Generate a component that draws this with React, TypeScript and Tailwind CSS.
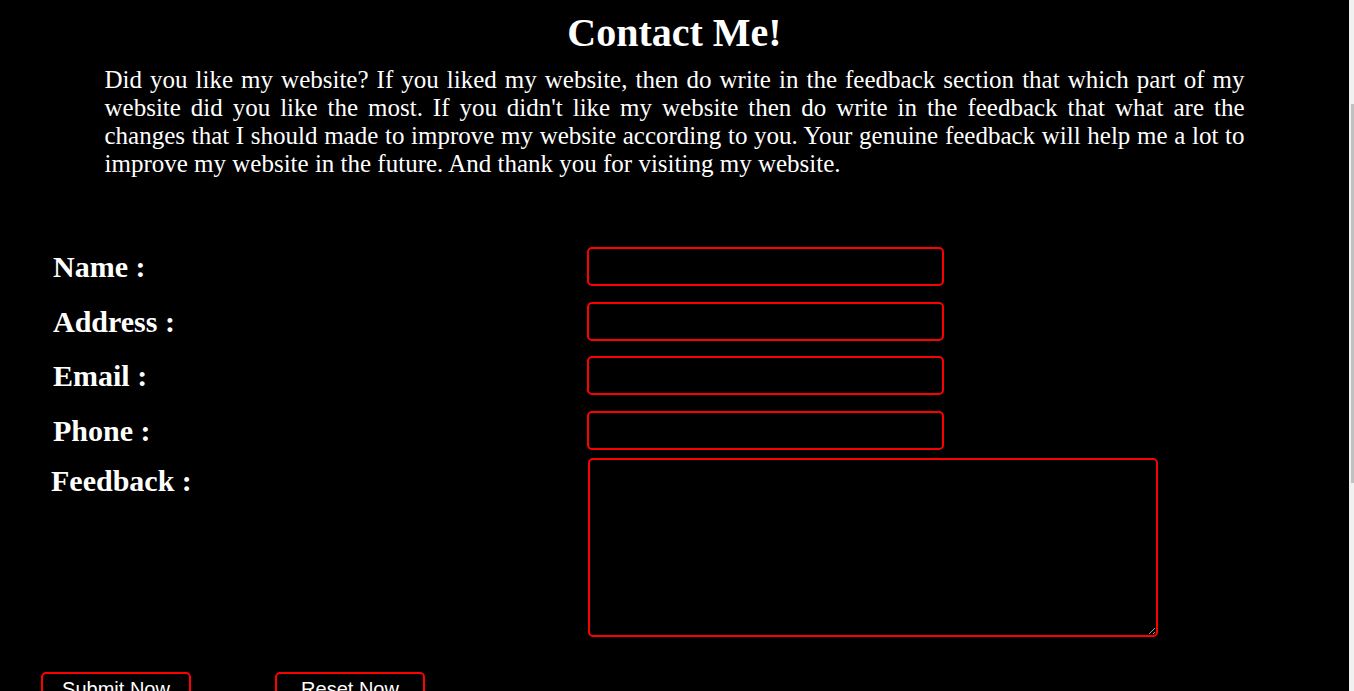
import React from "react";

const fields = ["Name", "Address", "Email", "Phone"];

function Contact() {
  return (
    <div className="flex-1 min-w-0 pt-[11px] font-['Liberation_Serif',serif] text-white">
      <h1 className="text-center text-[40px] font-bold leading-[44px]">Contact Me!</h1>
      <p className="mx-auto mt-[11px] w-[1140px] text-justify text-[25px] leading-[28px]">
        Did you like my website? If you liked my website, then do write in the feedback section that which part of my
        website did you like the most. If you didn't like my website then do write in the feedback that what are the
        changes that I should made to improve my website according to you. Your genuine feedback will help me a lot to
        improve my website in the future. And thank you for visiting my website.
      </p>

      <form className="mt-[69px] flex flex-col">
        <div className="flex flex-col gap-y-[15.6px]">
          {fields.map((f) => (
            <div key={f} className="flex h-[39px] items-center">
              <label className="w-[587px] shrink-0 pl-[53px] text-[30px] font-bold leading-[33px]">{f} :</label>
              <input
                type="text"
                className="h-[39px] w-[357px] rounded-[5px] border-2 border-[#ff0000] bg-black px-2 text-white outline-none"
              />
            </div>
          ))}
        </div>
        <div className="mt-[8px] flex items-start">
          <label className="w-[588px] shrink-0 pl-[51px] pt-[6px] text-[30px] font-bold leading-[33px]">Feedback :</label>
          <textarea className="h-[179px] w-[570px] rounded-[5px] border-2 border-[#ff0000] bg-black p-2 text-white outline-none" />
        </div>
        <div className="mt-[35px] flex gap-x-[84px] pl-[41px] font-['Liberation_Sans',sans-serif]">
          <button type="submit" className="w-[150px] rounded-[5px] border-2 border-[#ff0000] bg-black py-[4px] text-[20px] leading-[23px] text-white">
            Submit Now
          </button>
          <button type="reset" className="w-[150px] rounded-[5px] border-2 border-[#ff0000] bg-black py-[4px] text-[20px] leading-[23px] text-white">
            Reset Now
          </button>
        </div>
      </form>
    </div>
  );
}

export default function App() {
  return (
    <div className="flex h-[691px] overflow-hidden bg-black">
      <Contact />
      {/* thin page scrollbar */}
      <div className="flex w-[5px] shrink-0 flex-col bg-[#f1f1f1]">
        <div className="h-[104px]" />
        <div className="ml-auto h-[379px] w-[3px] bg-[#c1c1c1]" />
      </div>
    </div>
  );
}
